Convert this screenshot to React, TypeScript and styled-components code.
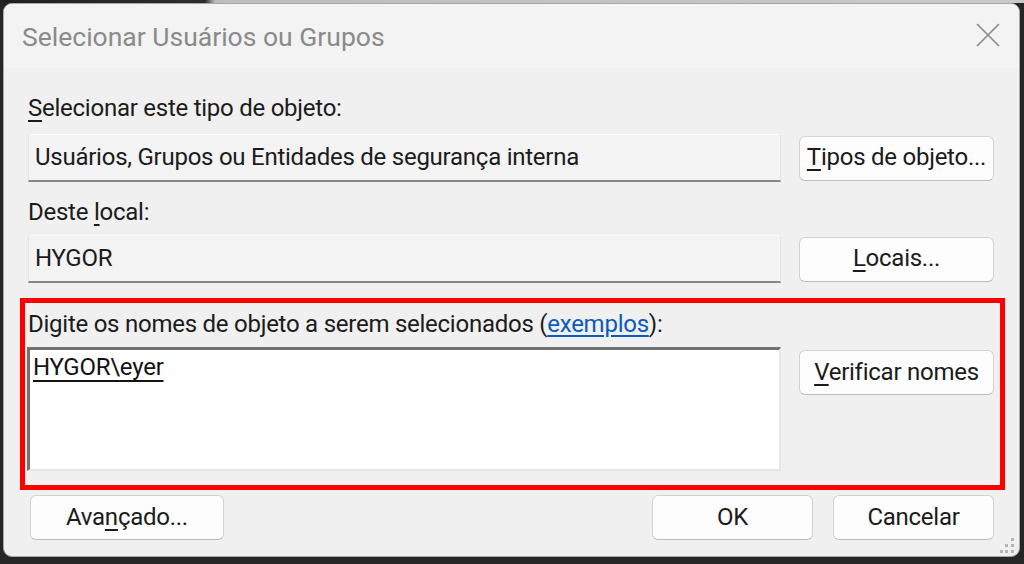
import styled, { createGlobalStyle } from "styled-components";

const GlobalStyle = createGlobalStyle`
  html, body {
    margin: 0;
    padding: 0;
    background: #262626;
  }
  body {
    font-family: Roboto, "Liberation Sans", sans-serif;
  }
`;

const Desktop = styled.div`
  width: 1024px;
  height: 564px;
  box-sizing: border-box;
  padding: 3px 4px 7px 3px;
  background: linear-gradient(90deg, #202020 0%, #2c2c2c 20%, #bdbdbd 21%, #c9c9c9 100%);
  background-size: 100% 3px;
  background-repeat: no-repeat;
  background-color: #262626;
`;

const Window = styled.div`
  position: relative;
  height: 100%;
  box-sizing: border-box;
  display: flex;
  flex-direction: column;
  background: #f0f0f0;
  border: 1px solid #a7a7a7;
  border-radius: 9px;
  overflow: hidden;
`;

const TitleBar = styled.div`
  height: 64px;
  flex-shrink: 0;
  display: flex;
  align-items: center;
  justify-content: space-between;
  padding: 0 19px 0 18px;
  background: #f3f3f3;
  box-sizing: border-box;
`;

const Title = styled.span`
  font-size: 26.5px;
  color: #8a8a8a;
`;

const CloseButton = styled.button`
  width: 24px;
  height: 24px;
  padding: 0;
  border: none;
  background: transparent;
  display: flex;
  margin-top: -2px;
`;

const Content = styled.div`
  padding: 0 14px 0 16px;
  display: flex;
  flex-direction: column;
`;

const Section = styled.div<{ $highlight?: boolean; $top: number; $bottom: number }>`
  border: 5px solid ${(p) => (p.$highlight ? "#ff0000" : "transparent")};
  padding: ${(p) => p.$top}px 6px ${(p) => p.$bottom}px 3px;
  display: grid;
  grid-template-columns: 1fr 195px;
  column-gap: 18px;
  align-items: center;
`;

const Label = styled.div<{ $before?: number; $after: number }>`
  grid-column: 1 / 3;
  font-size: 24px;
  letter-spacing: -0.25px;
  line-height: 30px;
  color: #1b1b1b;
  white-space: nowrap;
  margin-top: ${(p) => p.$before ?? 0}px;
  margin-bottom: ${(p) => p.$after}px;
`;

const Key = styled.span`
  text-decoration: underline;
  text-underline-offset: 4px;
  text-decoration-thickness: 2px;
`;

const Link = styled.a`
  color: #0b5cb8;
  text-decoration: underline;
  text-underline-offset: 3px;
  cursor: pointer;
`;

const ReadField = styled.div`
  height: 48px;
  box-sizing: border-box;
  display: flex;
  align-items: center;
  padding: 0 0 2px 6px;
  font-size: 24px;
  letter-spacing: -0.25px;
  color: #1b1b1b;
  background: #f3f3f3;
  border: 1px solid #e4e4e4;
  border-top-color: #fbfbfb;
  border-bottom: 2px solid #858585;
  border-radius: 3px 3px 0 0;
  white-space: nowrap;
`;

const NamesBox = styled.div`
  height: 124px;
  box-sizing: border-box;
  align-self: start;
  margin-left: -1px;
  background: #ffffff;
  border-style: solid;
  border-width: 3px 2px 2px 3px;
  border-color: #717171 #e6e6e6 #e6e6e6 #717171;
  padding: 2px 3px;
  font-size: 24px;
  letter-spacing: -0.25px;
  line-height: 30px;
  color: #141414;
`;

const Resolved = styled.span`
  text-decoration: underline;
  text-underline-offset: 5px;
  text-decoration-thickness: 2px;
`;

const Button = styled.button<{ $width?: number }>`
  width: ${(p) => (p.$width ? `${p.$width}px` : "100%")};
  height: 45px;
  box-sizing: border-box;
  padding: 0 0 2px;
  font-family: Roboto, "Liberation Sans", sans-serif;
  font-size: 24px;
  letter-spacing: -0.25px;
  color: #1b1b1b;
  background: #fdfdfd;
  border: 1px solid #d3d3d3;
  border-bottom-color: #bdbdbd;
  border-radius: 6px;
  white-space: nowrap;
`;

const SideButton = styled(Button)`
  align-self: start;
  margin-top: 3px;
`;

const Footer = styled.div`
  display: flex;
  align-items: center;
  gap: 20px;
  padding: 5px 25px 0 26px;
`;

const Spacer = styled.div`
  flex: 1;
`;

const Grip = styled.svg`
  position: absolute;
  right: 4px;
  bottom: 2px;
`;

export default function App() {
  return (
    <>
      <GlobalStyle />
      <Desktop>
        <Window>
          <TitleBar>
            <Title>Selecionar Usuários ou Grupos</Title>
            <CloseButton aria-label="Fechar">
              <svg width="24" height="24" viewBox="0 0 24 24">
                <path d="M1 1 L23 23 M23 1 L1 23" stroke="#8c8c8c" strokeWidth="1.7" fill="none" />
              </svg>
            </CloseButton>
          </TitleBar>
          <Content>
            <Section $top={20} $bottom={10}>
              <Label $after={11}>
                <Key>S</Key>elecionar este tipo de objeto:
              </Label>
              <ReadField>Usuários, Grupos ou Entidades de segurança interna</ReadField>
              <Button>
                <Key>T</Key>ipos de objeto...
              </Button>
              <Label $before={15} $after={8}>
                Deste <Key>l</Key>ocal:
              </Label>
              <ReadField>HYGOR</ReadField>
              <Button>
                <Key>L</Key>ocais...
              </Button>
            </Section>
            <Section $highlight $top={6} $bottom={14}>
              <Label $after={8}>
                Digite os nomes de objeto a serem selecionados (<Link>exemplos</Link>):
              </Label>
              <NamesBox>
                <Resolved>HYGOR\eyer</Resolved>
              </NamesBox>
              <SideButton>
                <Key>V</Key>erificar nomes
              </SideButton>
            </Section>
          </Content>
          <Footer>
            <Button $width={194}>
              Ava<Key>n</Key>çado...
            </Button>
            <Spacer />
            <Button $width={161}>OK</Button>
            <Button $width={161}>Cancelar</Button>
          </Footer>
          <Grip width="15" height="16" viewBox="0 0 15 16">
            <g fill="#b5b5b5">
              <rect x="11" y="0" width="3" height="3" />
              <rect x="11" y="6" width="3" height="3" />
              <rect x="5" y="6" width="3" height="3" />
              <rect x="11" y="12" width="3" height="3" />
              <rect x="5" y="12" width="3" height="3" />
              <rect x="0" y="12" width="3" height="3" />
            </g>
          </Grip>
        </Window>
      </Desktop>
    </>
  );
}
